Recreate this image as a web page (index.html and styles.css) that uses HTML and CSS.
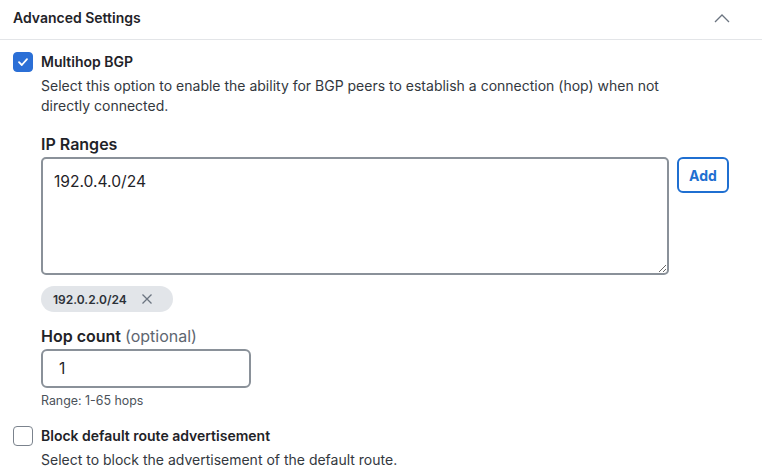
FILE: index.html
```html
<!DOCTYPE html>
<html>
<head>
    <meta charset="UTF-8">
    <title>Advanced Settings</title>
    <link rel="stylesheet" href="styles.css">
</head>
<body>
<div class="panel">
    <div class="panel-header">
        <span class="panel-title">Advanced Settings</span>
        <svg class="chevron" width="16" height="10" viewBox="0 0 16 10">
            <path d="M1 9 L8 2 L15 9" fill="none" stroke="#6b7480" stroke-width="1.3"/>
        </svg>
    </div>

    <div class="option">
        <span class="checkbox checked">
            <svg width="12" height="10" viewBox="0 0 12 10">
                <path d="M2 5.2 L4.8 8 L10 2.2" fill="none" stroke="#fff" stroke-width="1.8" stroke-linecap="round" stroke-linejoin="round"/>
            </svg>
        </span>
        <div class="option-body">
            <div class="option-label">Multihop BGP</div>
            <p class="option-desc">Select this option to enable the ability for BGP peers to establish a connection (hop) when not directly connected.</p>

            <div class="field">
                <label class="field-label" for="ranges">IP Ranges</label>
                <div class="range-row">
                    <textarea id="ranges">192.0.4.0/24</textarea>
                    <button class="btn-add">Add</button>
                </div>
                <div class="chips">
                    <span class="chip">192.0.2.0/24
                        <svg width="12" height="12" viewBox="0 0 12 12">
                            <path d="M1.5 1.5 L10.5 10.5 M10.5 1.5 L1.5 10.5" stroke="#6b7480" stroke-width="1.3"/>
                        </svg>
                    </span>
                </div>
            </div>

            <div class="field">
                <label class="field-label" for="hops">Hop count <span class="optional">(optional)</span></label>
                <input type="text" id="hops" class="hop-input" value="1">
                <div class="hint">Range: 1-65 hops</div>
            </div>
        </div>
    </div>

    <div class="option">
        <span class="checkbox"></span>
        <div class="option-body">
            <div class="option-label">Block default route advertisement</div>
            <p class="option-desc">Select to block the advertisement of the default route.</p>
        </div>
    </div>
</div>
</body>
</html>
```

FILE: styles.css
```css
body {
    margin: 0;
    font-family: Inter, "Noto Sans", sans-serif;
    color: #1f2328;
    background: #fff;
}

.panel {
    width: 762px;
}

.panel-header {
    display: flex;
    justify-content: space-between;
    align-items: center;
    height: 39px;
    padding: 0 32px 0 13px;
    border-bottom: 1px solid #e3e5e8;
}

.panel-title {
    font-size: 14px;
    font-weight: 600;
    color: #1f2328;
    padding-bottom: 4px;
}

.chevron {
    margin-bottom: 3px;
}

.option {
    display: flex;
    gap: 8px;
    padding-left: 13px;
}

.panel-header + .option {
    margin-top: 12px;
}

.checkbox {
    flex: none;
    width: 20px;
    height: 20px;
    box-sizing: border-box;
    border: 1.5px solid #7b838d;
    border-radius: 4px;
    display: flex;
    align-items: center;
    justify-content: center;
}

.checkbox.checked {
    background: #2b6fd6;
    border-color: #2b6fd6;
}

.option-body {
    flex: 1;
}

.option-label {
    font-size: 14px;
    font-weight: 600;
    line-height: 20px;
}

.option-desc {
    margin: 4px 0 0;
    font-size: 14px;
    line-height: 20px;
    color: #33383e;
    width: 660px;
}

.field {
    margin-top: 18px;
}

.field + .field {
    margin-top: 14px;
}

.field-label {
    display: block;
    font-size: 16px;
    font-weight: 600;
    line-height: 20px;
    margin-bottom: 3px;
}

.optional {
    font-weight: 400;
    color: #5e6670;
}

.range-row {
    display: flex;
    gap: 8px;
    align-items: flex-start;
}

textarea {
    width: 628px;
    height: 118px;
    box-sizing: border-box;
    border: 2px solid #8a9199;
    border-radius: 5px;
    padding: 13px 11px;
    font-family: Inter, "Noto Sans", sans-serif;
    font-size: 15.6px;
    color: #1f2328;
    line-height: 20px;
}

.btn-add {
    width: 52px;
    height: 36px;
    background: #fff;
    border: 2px solid #1f6fd1;
    border-radius: 6px;
    color: #1f6fd1;
    font-family: Inter, "Noto Sans", sans-serif;
    font-size: 14px;
    font-weight: 700;
    cursor: pointer;
}

.chips {
    margin-top: 11px;
}

.chip {
    display: inline-flex;
    align-items: center;
    gap: 14px;
    height: 26px;
    padding: 0 20px 0 12px;
    background: #e2e5e9;
    border-radius: 13px;
    font-size: 12px;
    font-weight: 600;
    color: #2c3138;
}

.hop-input {
    width: 210px;
    height: 39px;
    box-sizing: border-box;
    border: 2px solid #8a9199;
    border-radius: 6px;
    padding: 0 16px;
    font-family: Inter, "Noto Sans", sans-serif;
    font-size: 15.6px;
    color: #1f2328;
}

.hint {
    margin-top: 5px;
    font-size: 12.4px;
    color: #4b525a;
    line-height: 16px;
}

.option + .option {
    margin-top: 17px;
}
```
